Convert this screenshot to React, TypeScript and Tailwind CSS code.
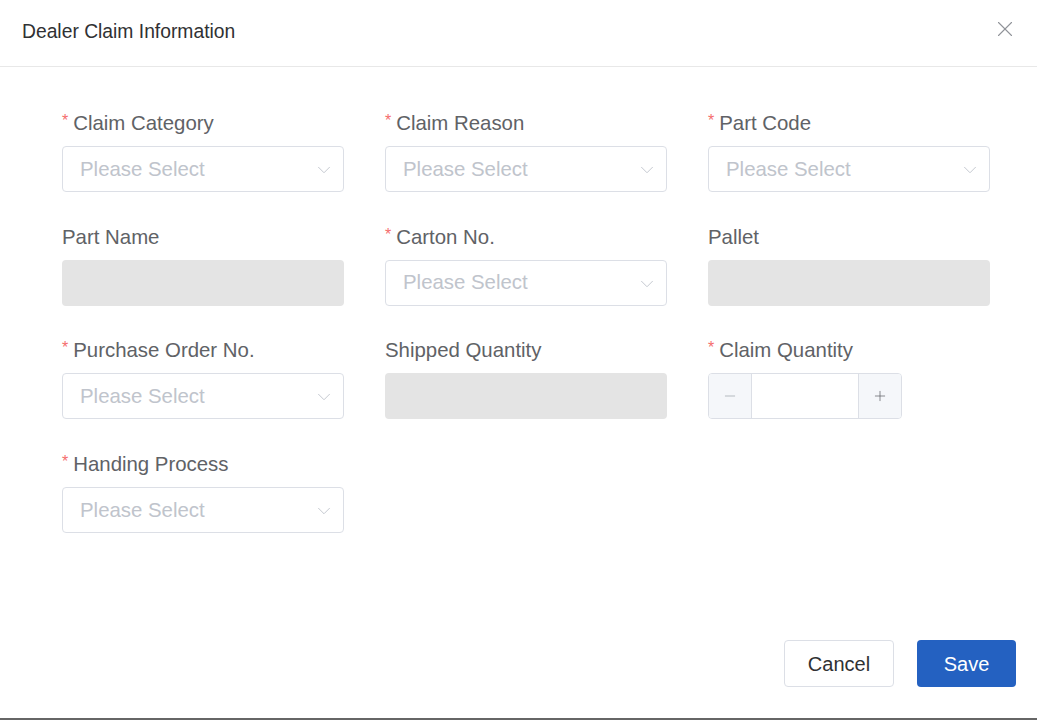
import { ChevronDown, Minus, Plus, X } from 'lucide-react';

type Field = {
  label: string;
  required?: boolean;
  kind: 'select' | 'disabled' | 'stepper' | 'empty';
};

const FIELDS: Field[] = [
  { label: 'Claim Category', required: true, kind: 'select' },
  { label: 'Claim Reason', required: true, kind: 'select' },
  { label: 'Part Code', required: true, kind: 'select' },
  { label: 'Part Name', kind: 'disabled' },
  { label: 'Carton No.', required: true, kind: 'select' },
  { label: 'Pallet', kind: 'disabled' },
  { label: 'Purchase Order No.', required: true, kind: 'select' },
  { label: 'Shipped Quantity', kind: 'disabled' },
  { label: 'Claim Quantity', required: true, kind: 'stepper' },
  { label: 'Handing Process', required: true, kind: 'select' },
];

function Control({ kind }: { kind: Field['kind'] }) {
  if (kind === 'select') {
    return (
      <div className="h-[46px] w-full rounded-[4px] border border-[#dcdfe6] bg-white flex items-center pl-[17px] pr-[8px]">
        <span className="flex-1 text-[20.4px] text-[#c0c4cc]">Please Select</span>
        <ChevronDown size={22} strokeWidth={1} className="text-[#c0c4cc] mt-[2px]" />
      </div>
    );
  }
  if (kind === 'disabled') {
    return <div className="h-[46px] w-full rounded-[4px] bg-[#e4e4e4]" />;
  }
  return (
    <div className="h-[46px] w-[194px] rounded-[4px] border border-[#dcdfe6] flex overflow-hidden">
      <div className="w-[43px] bg-[#f5f7fa] border-r border-[#dcdfe6] flex items-center justify-center">
        <Minus size={16} strokeWidth={1.1} className="text-[#a0a4ac]" />
      </div>
      <div className="flex-1 bg-white" />
      <div className="w-[43px] bg-[#f5f7fa] border-l border-[#dcdfe6] flex items-center justify-center">
        <Plus size={16} strokeWidth={1.1} className="text-[#606266]" />
      </div>
    </div>
  );
}

export default function App() {
  return (
    <div
      className="w-full h-[720px] bg-white flex flex-col border-b-2 border-[#666]"
      style={{ fontFamily: '"Liberation Sans", Arial, sans-serif' }}
    >
      {/* Header */}
      <div className="h-[67px] border-b border-[#e8e8e8] flex items-center justify-between pl-[22px] pr-[19px] shrink-0">
        <span className="text-[19.3px] text-[#303133] -mt-[2px]">Dealer Claim Information</span>
        <X size={26} strokeWidth={1} className="text-[#909399] -mt-[8px]" />
      </div>

      {/* Form */}
      <div className="pt-[44px] pl-[62px] grid grid-cols-[282px_282px_282px] gap-x-[41px] gap-y-[32.67px]">
        {FIELDS.map(f => (
          <div key={f.label}>
            <div className="h-[24px] flex items-center mb-[11px] text-[20.4px] leading-[24px] text-[#606266]">
              {f.required && <span className="text-[#f56c6c] text-[16px] mr-[5px] -mt-[4px]">*</span>}
              <span>{f.label}</span>
            </div>
            <Control kind={f.kind} />
          </div>
        ))}
      </div>

      {/* Footer */}
      <div className="mt-auto flex justify-end gap-[23px] pr-[21px] pb-[31px]">
        <button className="w-[110px] h-[47px] rounded-[4px] border border-[#dcdfe6] bg-white text-[20px] text-[#303133]">
          Cancel
        </button>
        <button className="w-[99px] h-[47px] rounded-[4px] bg-[#2461c1] text-[20px] text-white">
          Save
        </button>
      </div>
    </div>
  );
}
